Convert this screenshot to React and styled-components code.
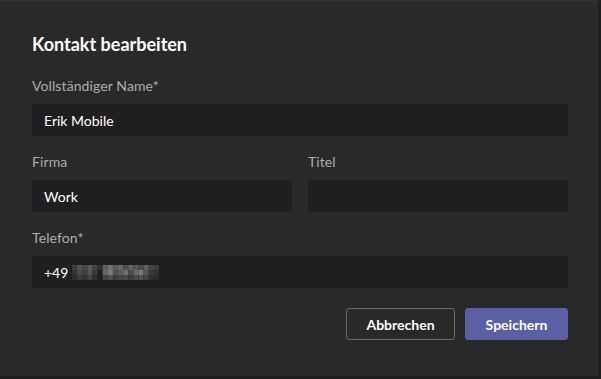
import React from "react";
import styled, { createGlobalStyle } from "styled-components";

const Global = createGlobalStyle`
  html, body { margin: 0; padding: 0; background: #1f1f1f; }
  body { font-family: Lato, "Noto Sans", sans-serif; -webkit-font-smoothing: antialiased; }
  * { box-sizing: border-box; }
`;

const Dialog = styled.div`
  width: 598px;
  height: 376px;
  background: #292929;
  border-top: 1px solid #323232;
  padding: 31px 30px 0 32px;
  display: flex;
  flex-direction: column;
`;

const Title = styled.h1`
  margin: 0 0 20px;
  font-size: 18px;
  line-height: 24px;
  font-weight: 700;
  color: #ffffff;
`;

const Row = styled.div`
  display: grid;
  grid-template-columns: ${(p) => (p.cols === 2 ? "1fr 1fr" : "1fr")};
  column-gap: 16px;
  margin-bottom: 16px;
`;

const Field = styled.div`
  display: flex;
  flex-direction: column;
`;

const Label = styled.label`
  font-size: 14px;
  letter-spacing: 0.1px;
  line-height: 20px;
  color: #adadad;
  margin-bottom: 8px;
`;

const Input = styled.div`
  height: 32px;
  background: #1f1f1f;
  border-radius: 3px;
  padding: 0 12px;
  display: flex;
  align-items: center;
  gap: 4px;
  font-size: 14px;
  color: #ffffff;
`;

const Actions = styled.div`
  display: flex;
  justify-content: flex-end;
  gap: 10px;
  margin-top: 4px;
`;

const Button = styled.button`
  height: 32px;
  padding: 0;
  width: ${(p) => (p.primary ? "103px" : "109px")};
  border-radius: 3px;
  font-family: inherit;
  font-size: 14px;
  font-weight: 700;
  color: #ffffff;
  background: ${(p) => (p.primary ? "#5b5fa3" : "transparent")};
  border: 1px solid ${(p) => (p.primary ? "#5b5fa3" : "#6b6b6b")};
`;

const blocks = [
  ["#3c3c3c", "#555", "#4a4a4a", "#5a5a5a", "#444", "#303030", "#5f5f5f", "#707070", "#5a5a5a", "#6a6a6a", "#4f4f4f", "#636363", "#585858", "#4a4a4a", "#5e5e5e", "#444", "#3c3c3c"],
  ["#333", "#4a4a4a", "#3f3f3f", "#555", "#3a3a3a", "", "#666", "#7a7a7a", "#505050", "#5c5c5c", "#6f6f6f", "#4c4c4c", "#6a6a6a", "#7a7a7a", "#555", "#3a3a3a", "#303030"],
  ["#2c2c2c", "#3d3d3d", "#333", "#444", "#2f2f2f", "", "#444", "#505050", "#3c3c3c", "#474747", "#4a4a4a", "#3c3c3c", "#4c4c4c", "#525252", "#424242", "#2f2f2f", "#2a2a2a"],
];

const Redacted = () => (
  <svg width="88" height="15" viewBox="0 0 86 15" preserveAspectRatio="none">
    {blocks.map((row, r) =>
      row.map((c, i) =>
        c ? <rect key={r + "-" + i} x={i * 5} y={r * 5} width="5" height="5" fill={c} /> : null
      )
    )}
  </svg>
);

export default function App() {
  return (
    <>
      <Global />
      <Dialog>
        <Title>Kontakt bearbeiten</Title>
        <Row>
          <Field>
            <Label>Vollständiger Name*</Label>
            <Input>Erik Mobile</Input>
          </Field>
        </Row>
        <Row cols={2}>
          <Field>
            <Label>Firma</Label>
            <Input>Work</Input>
          </Field>
          <Field>
            <Label>Titel</Label>
            <Input />
          </Field>
        </Row>
        <Row>
          <Field>
            <Label>Telefon*</Label>
            <Input>
              +49 <Redacted />
            </Input>
          </Field>
        </Row>
        <Actions>
          <Button>Abbrechen</Button>
          <Button primary>Speichern</Button>
        </Actions>
      </Dialog>
    </>
  );
}
